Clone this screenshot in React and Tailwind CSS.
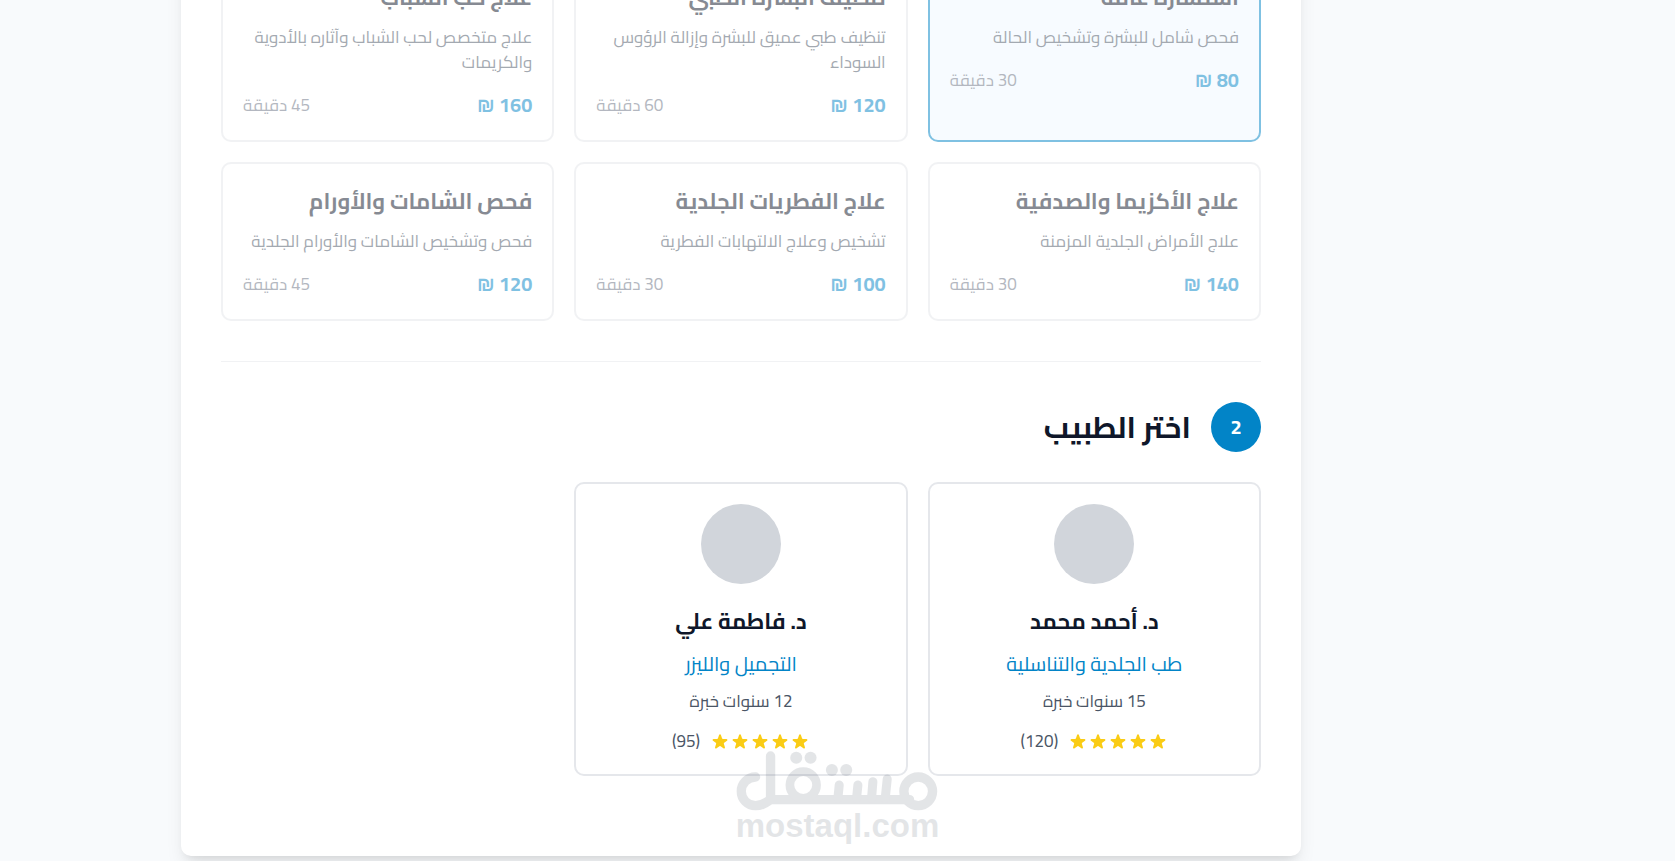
import clsx from 'clsx';

const services = [
  { name: 'استشارة عامة', desc: 'فحص شامل للبشرة وتشخيص الحالة', price: 80, duration: 30 },
  { name: 'تنظيف البشرة الطبي', desc: 'تنظيف طبي عميق للبشرة وإزالة الرؤوس السوداء', price: 120, duration: 60 },
  { name: 'علاج حب الشباب', desc: 'علاج متخصص لحب الشباب وآثاره بالأدوية والكريمات', price: 160, duration: 45 },
  { name: 'علاج الأكزيما والصدفية', desc: 'علاج الأمراض الجلدية المزمنة', price: 140, duration: 30 },
  { name: 'علاج الفطريات الجلدية', desc: 'تشخيص وعلاج الالتهابات الفطرية', price: 100, duration: 30 },
  { name: 'فحص الشامات والأورام', desc: 'فحص وتشخيص الشامات والأورام الجلدية', price: 120, duration: 45 },
];

const doctors = [
  { name: 'د. أحمد محمد', specialty: 'طب الجلدية والتناسلية', years: 15, reviews: 120 },
  { name: 'د. فاطمة علي', specialty: 'التجميل والليزر', years: 12, reviews: 95 },
];

function Star() {
  return (
    <svg className="w-5 h-5 text-[#facc15]" viewBox="0 0 20 20" fill="currentColor" aria-hidden="true">
      <path d="M9.049 2.927c.3-.921 1.603-.921 1.902 0l1.07 3.292a1 1 0 00.95.69h3.462c.969 0 1.371 1.24.588 1.81l-2.8 2.034a1 1 0 00-.364 1.118l1.07 3.292c.3.921-.755 1.688-1.54 1.118l-2.8-2.034a1 1 0 00-1.175 0l-2.8 2.034c-.784.57-1.838-.197-1.539-1.118l1.07-3.292a1 1 0 00-.364-1.118L2.98 8.72c-.783-.57-.38-1.81.588-1.81h3.461a1 1 0 00.951-.69l1.07-3.292z" />
    </svg>
  );
}

function ServiceCard({ service, selected }) {
  return (
    <button
      type="button"
      className={clsx(
        'flex flex-col p-5 text-right border-2 rounded-[10px] cursor-pointer',
        selected ? 'border-[#0284c7] bg-[#f0f9ff]' : 'border-gray-200'
      )}
    >
      <span className="mb-[10px] text-[22px] leading-[35px] font-bold text-[#0f172a]">{service.name}</span>
      <span className="mb-[15px] text-[17px] leading-[25px] text-gray-600">{service.desc}</span>
      <span className="flex items-center justify-between w-full leading-[30px]">
        <span className="text-[20px] font-bold text-[#0284c7]">{service.price} ₪</span>
        <span className="text-[17px] text-gray-500">{service.duration} دقيقة</span>
      </span>
    </button>
  );
}

function DoctorCard({ doctor }) {
  return (
    <button
      type="button"
      className="flex flex-col items-center p-5 text-center border-2 border-gray-200 rounded-[10px] cursor-pointer"
    >
      <span className="w-20 h-20 mb-5 rounded-full bg-[#d1d5db]" />
      <span className="mb-[10px] text-[22px] leading-[35px] font-bold text-[#0f172a]">{doctor.name}</span>
      <span className="mb-[10px] text-[20px] leading-[30px] text-[#0284c7]">{doctor.specialty}</span>
      <span className="mb-[15px] text-[17px] leading-[25px] text-gray-600">{doctor.years} سنوات خبرة</span>
      <span className="flex items-center justify-center gap-[10px]">
        <span className="flex">
          {[1, 2, 3, 4, 5].map((n) => (
            <Star key={n} />
          ))}
        </span>
        <span className="text-[17px] leading-[25px] text-gray-600">({doctor.reviews})</span>
      </span>
    </button>
  );
}

function Watermark() {
  return (
    <div
      dir="ltr"
      className="absolute bottom-5 left-1/2 flex flex-col items-center -translate-x-1/2 opacity-15 pointer-events-none text-gray-600"
    >
      <svg width="202" height="60" viewBox="50 62 606 180" fill="none" stroke="currentColor" strokeWidth="28" strokeLinecap="round" aria-hidden="true">
        <circle cx="596" cy="183" r="43" />
        <path d="M108 140a43 43 0 1 0 0 86c18 0 26-6 45-18H570M153 77V208" />
        <circle cx="251" cy="164" r="40" strokeWidth="26" />
        <path d="M359 164l-4 40M415 164l-4 40M460 154l-4 50M503 146l-6 58" strokeWidth="27" />
        <g fill="currentColor" stroke="none">
          <circle cx="230" cy="82" r="18" />
          <circle cx="273" cy="82" r="18" />
          <circle cx="337" cy="119" r="18" />
          <circle cx="380" cy="119" r="18" />
        </g>
      </svg>
      <span className="font-['Liberation_Sans',sans-serif] text-[33px] leading-[30px] font-bold">mostaql.com</span>
    </div>
  );
}

function App() {
  return (
    <div
      dir="rtl"
      className="relative flex flex-col justify-end h-screen overflow-hidden bg-[#f8fafc] pb-[5px] pr-[193px] font-['Cairo','Liberation_Sans','DejaVu_Sans',sans-serif]"
    >
      <main className="w-full max-w-[1120px] mx-auto p-10 bg-white rounded-[10px] shadow-[0_12px_19px_-4px_rgba(0,0,0,0.1),0_5px_8px_-5px_rgba(0,0,0,0.1)]">
        <section className="pb-10 mb-10 border-b border-gray-200 opacity-50">
          <div className="grid grid-cols-3 gap-5">
            {services.map((service, i) => (
              <ServiceCard key={service.name} service={service} selected={i === 0} />
            ))}
          </div>
        </section>

        <section className="pb-10">
          <div className="flex items-center gap-5 mb-[30px]">
            <div className="flex items-center justify-center w-[50px] h-[50px] rounded-full bg-[#0284c7] text-[20px] font-bold text-white">
              2
            </div>
            <h2 className="text-[30px] leading-10 font-bold text-[#0f172a]">اختر الطبيب</h2>
          </div>
          <div className="grid grid-cols-3 gap-5">
            {doctors.map((doctor) => (
              <DoctorCard key={doctor.name} doctor={doctor} />
            ))}
          </div>
        </section>
      </main>
      <Watermark />
    </div>
  );
}

export default App;
